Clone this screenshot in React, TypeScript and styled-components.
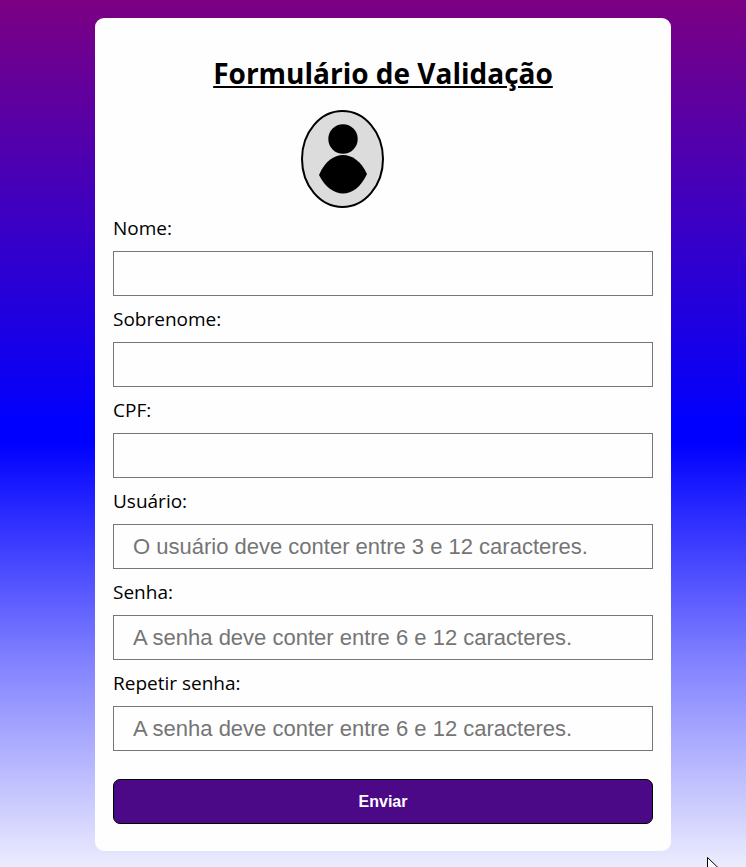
import React from "react";
import styled, { createGlobalStyle } from "styled-components";

const GlobalStyle = createGlobalStyle`
  *, *::before, *::after { box-sizing: border-box; }
  body { margin: 0; font-family: "Open Sans", sans-serif; color: #000; }
`;

const Page = styled.main`
  position: relative;
  min-height: 100vh;
  padding: 18px 18px 16px 38px;
  overflow: hidden;
  background: linear-gradient(180deg, #7c0082 0%, #0000ff 49%, #0000ff 51%, #8080ff 76%, #ececfe 100%);
`;

const Card = styled.section`
  max-width: 576px;
  margin: 0 auto;
  padding: 35px 18px 27px;
  border-radius: 9px;
  background: #fefefe;
`;

const Title = styled.h1`
  margin: 0 0 17px;
  font-size: 28px;
  line-height: 40px;
  font-weight: 700;
  text-align: center;
  text-decoration: underline;
`;

const Avatar = styled.svg`
  display: block;
  width: 83px;
  height: 98px;
  margin-left: 188px;
`;

const Form = styled.form`
  display: flex;
  flex-direction: column;
  gap: 3px;
`;

const Field = styled.div`
  display: flex;
  flex-direction: column;
`;

const Label = styled.label`
  padding: 7px 0 10px;
  font-size: 19px;
  line-height: 26px;
`;

const Input = styled.input`
  width: 100%;
  height: 45px;
  padding: 0 19px;
  border: 1px solid #767676;
  border-radius: 0;
  background: #fefefe;
  font-family: "Liberation Sans", Arial, sans-serif;
  font-size: 22px;
  &::placeholder { color: #757575; opacity: 1; }
`;

const Submit = styled.button`
  height: 45px;
  margin-top: 25px;
  border: 1px solid #000;
  border-radius: 7px;
  background: #4b0887;
  color: #fff;
  font: 700 16px "Liberation Sans", Arial, sans-serif;
  cursor: pointer;
`;

const Pointer = styled.svg`
  position: absolute;
  right: 26px;
  bottom: -10px;
  width: 13px;
  height: 20px;
`;

const fields = [
  { id: "nome", label: "Nome:", type: "text" },
  { id: "sobrenome", label: "Sobrenome:", type: "text" },
  { id: "cpf", label: "CPF:", type: "text" },
  { id: "usuario", label: "Usuário:", type: "text", placeholder: "O usuário deve conter entre 3 e 12 caracteres." },
  { id: "senha", label: "Senha:", type: "password", placeholder: "A senha deve conter entre 6 e 12 caracteres." },
  { id: "repetir-senha", label: "Repetir senha:", type: "password", placeholder: "A senha deve conter entre 6 e 12 caracteres." },
];

export default function App() {
  return (
    <>
      <GlobalStyle />
      <Page>
        <Card>
          <Title>Formulário de Validação</Title>
          <Avatar viewBox="0 0 83 98" aria-hidden="true">
            <ellipse cx="41.5" cy="49" rx="40.5" ry="48" fill="#dcdcdc" stroke="#000" strokeWidth="2" />
            <circle cx="42" cy="29" r="14.7" />
            <path d="M18 65C24 51 33 45 42 45S60 51 66 64C60 77 51 83.5 42 83.5S24 77 18 65Z" />
          </Avatar>
          <Form onSubmit={(event: React.FormEvent) => event.preventDefault()}>
            {fields.map(({ id, label, type, placeholder }) => (
              <Field key={id}>
                <Label htmlFor={id}>{label}</Label>
                <Input id={id} name={id} type={type} placeholder={placeholder} />
              </Field>
            ))}
            <Submit type="submit">Enviar</Submit>
          </Form>
        </Card>
        <Pointer viewBox="0 0 13 20" aria-hidden="true">
          <path d="M.5.5V17L4.5 13L7 19L10 18L7.5 12H12.5Z" fill="#fff" stroke="#000" />
        </Pointer>
      </Page>
    </>
  );
}
